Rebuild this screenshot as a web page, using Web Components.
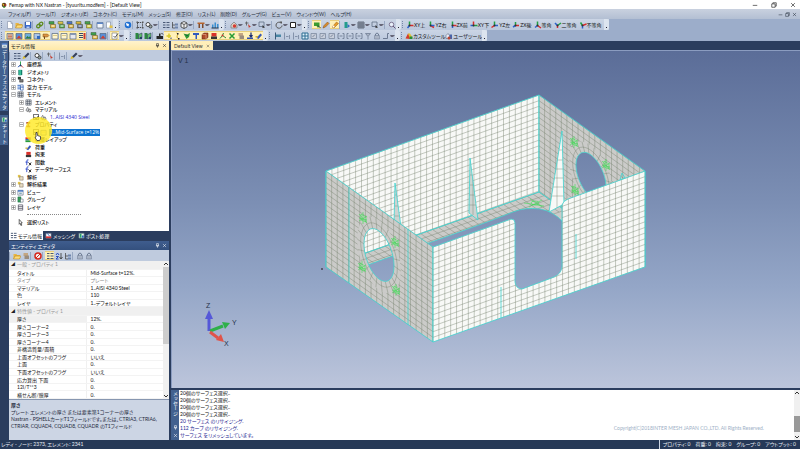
<!DOCTYPE html>
<html lang="ja">
<head>
<meta charset="utf-8">
<title>Femap with NX Nastran</title>
<style>
  html, body {
    height: 100%;
    margin: 0;
  }

  body {
    font: 5px/8px Lato, "Noto Sans CJK JP", sans-serif;
    font-feature-settings: "palt";
    background: #2b3d5e;
    color: #111;
    overflow: hidden;
  }
</style>
</head>
<body>
<femap-app></femap-app>

<script>
const reset = `
  * { box-sizing: border-box; }
  button, input, textarea { font: inherit; color: inherit; margin: 0; padding: 0; border: 0; background: none; }
  button { font-feature-settings: inherit; white-space: nowrap; }
  svg { display: block; }
`;

// 16x16 icon artwork
const axes = (a, b, c) => `<g fill="none" stroke-width="3"><path stroke="#22a045" d="M7 9${a}"/><path stroke="#d92c2c" d="M7 9${b}"/><path stroke="#2a62cf" d="M7 9${c}"/></g><circle cx="7" cy="9" r="2" fill="#333"/>`;
const box = (fill, extra = '') => `<path d="M2 3h12v11H2z" fill="${fill}" stroke="#54657f" stroke-width="1.4"/>${extra}`;
const stack = (a, b) => `<path d="M2 1h10v5H2z" fill="${a}" stroke="#3c5a3c"/><path d="M5 7h10v7H5z" fill="${b}" stroke="#5c5020"/><path d="M7 10h6" stroke="#fff" stroke-width="2"/>`;

const ICONS = {
  app: '<circle cx="8" cy="8" r="6" fill="#553a1e"/><path d="M3 3l6 3-3 6z" fill="#e2b32c"/><path d="M8 8l6-3v6z" fill="#c1392b"/><path d="M5 12h6v3H6z" fill="#3c9a3c"/>',
  new: '<path d="M3 1h7l3 4v10H3z" fill="#fff" stroke="#6c7b94"/><path d="M10 1v4h3" fill="none" stroke="#6c7b94"/>',
  open: '<path d="M1 4h6l1 2h6v8H1z" fill="#e9b543"/><path d="M4 8h12l-3 6H1z" fill="#ffdc77" stroke="#a67a1d"/>',
  save: '<path d="M2 2h12v12H2z" fill="#3a6bd0" stroke="#27458b"/><path d="M4 2h8v6H4z" fill="#fff"/><path d="M5 11h6v3H5z" fill="#b9cdf2"/>',
  link: '<g fill="none" stroke="#5e8a1e" stroke-width="2.6"><ellipse cx="5" cy="10" rx="4" ry="3" transform="rotate(-40 5 10)"/><ellipse cx="10" cy="6" rx="4" ry="3" transform="rotate(-40 10 6)"/></g>',
  s1: stack('#3fa24a', '#e8b93c'), s2: stack('#e2c34a', '#47a04c'), s3: stack('#4f6fd0', '#d9b03c'), s4: stack('#d8b23a', '#55699a'), s5: stack('#47a04c', '#d4cf3a'),
  win: box('#f4f7fc', '<path d="M2 3h12v3H2z" fill="#5c86c9"/>'),
  page: '<path d="M3 2h8v12H3z" fill="#fff" stroke="#67768e"/><path d="M9 9h6v5H9z" fill="#e2c34a"/>',
  globe: '<circle cx="8" cy="8" r="6.5" fill="#1e6fd2"/><path d="M4 4l6 2-1 5-4-2z" fill="#fff"/>',
  dash: '<path d="M3 3h10v10H3z" fill="none" stroke="#222" stroke-width="1.5" stroke-dasharray="3 1.5"/><path d="M1 1h3v3H1zM12 1h3v3h-3zM1 12h3v3H1zM12 12h3v3h-3z" fill="#555"/>',
  gear: '<circle cx="6" cy="7" r="4" fill="#fff" stroke="#444" stroke-width="2"/><circle cx="11" cy="11" r="3" fill="#9aa" stroke="#444" stroke-width="2"/>',
  list: '<path d="M2 3h5M2 8h5M2 13h5M9 3h6M9 8h6M9 13h6" stroke="#4a5a76" stroke-width="2.2"/>',
  tree: '<path d="M3 2v12h5M3 8h5" fill="none" stroke="#444" stroke-width="1.5"/><path d="M8 5h6v4H8zM8 11h6v4H8z" fill="#6f86ad"/>',
  cube: '<path d="M8 1l6 3v8l-6 3-6-3V4z" fill="#eee" stroke="#333" stroke-width="1.5"/><path d="M2 4l6 3 6-3M8 7v8" fill="none" stroke="#333" stroke-width="1.5"/>',
  beam: '<path d="M1 3h14v3H1z" fill="#b8642b"/><path d="M3 6h3v8H3zM10 6h3v8h-3z" fill="#7c4a2c"/>',
  bars: '<path d="M2 7h3v7H2zM7 3h3v11H7zM12 6h3v8h-3z" fill="#3a8fd0"/><path d="M1 14h14" stroke="#234" stroke-width="2"/>',
  home: '<path d="M2 8l6-6 6 6v6H2z" fill="#dcd3c6" stroke="#555"/><circle cx="9" cy="10" r="3.5" fill="#d63c31"/>',
  pick: '<path d="M2 4h7M5 1v8" stroke="#555" stroke-width="1.6"/><path d="M8 6l6 6-3 0-1 3z" fill="#c43c2c"/>',
  sel: '<path d="M2 2h10v9H2z" fill="none" stroke="#59687f" stroke-width="1.5"/><path d="M9 8l5 5-5 1z" fill="#333"/>',
  rot: '<path d="M12 4a6 6 0 1 0 2 5" fill="none" stroke="#555" stroke-width="2"/><path d="M9 1h5v5z" fill="#555"/>',
  sq: '<path d="M3 3h10v10H3z" fill="#fff" stroke="#222" stroke-width="2"/>',
  leaf: '<path d="M2 3h11v7l-3 4-3-4H2z" fill="#3b9b30"/><path d="M10 9l5 5" stroke="#234" stroke-width="2"/>',
  pencil: '<path d="M2 14l2-5 7-7 3 3-7 7z" fill="#d98c2d" stroke="#7e4d16"/>',
  pipe: '<path d="M2 12L11 2l4 3-9 9z" fill="#e59a2b" stroke="#965e14"/><circle cx="5" cy="11" r="2" fill="#fff"/>',
  teal: '<path d="M3 2h6v12H3z" fill="#239c8c"/><path d="M9 6l5 4-5 4z" fill="#2f6fc0"/>',
  grid: '<path d="M2 2h12v12H2zM2 6h12M2 10h12M6 2v12M10 2v12" fill="none" stroke="#3d4655" stroke-width="1.4"/>',
  lens: '<circle cx="7" cy="7" r="4.5" fill="#e9f0fb" stroke="#657" stroke-width="1.5"/><path d="M10 10l5 5" stroke="#657" stroke-width="2"/>',
  ax1: axes('V1', 'H15', 'L3 14'), ax2: axes('V1', 'L14 13', 'H15'), ax3: axes('V1', 'H15', 'V14'),
  ax4: axes('H15', 'V1', 'H1'), ax5: axes('V1', 'L1 13', 'H14'), ax6: axes('V2', 'H14', 'L2 12'),
  ax7: axes('V1', 'L14 14', 'L2 13'), ax8: axes('L14 4', 'V14', 'L2 4'), ax9: axes('L3 3', 'L15 6', 'V15'),
  g1: box('#d9cdbf', '<path d="M4 6h8M4 9h8M4 12h8" stroke="#c6562e" stroke-width="1.4"/>'),
  g2: box('#5a8fd6', '<path d="M3 13l5-6 5 6z" fill="#d33f2e"/>'),
  g3: box('#6fb0dd', '<path d="M3 13l4-5 3 3 2-3 2 5z" fill="#2f7d38"/>'),
  g4: box('#a9c5ec', '<path d="M8 8h6v6H8z" fill="#3169bd"/>'),
  g5: '<path d="M2 4h9l3 3-3 3H2z" fill="#db9440" stroke="#74491a"/><path d="M5 9v5" stroke="#74491a" stroke-width="2"/>',
  g6: box('#fff6cf', '<path d="M4 7h8" stroke="#b8a040"/>'),
  g7: box('#e6e9ef', '<path d="M2 3h12v3H2z" fill="#8798b5"/>'),
  g8: '<path d="M2 3h8M2 7h8M2 11h8" stroke="#35486d" stroke-width="2"/><path d="M11 2h4v12h-4z" fill="#c9382e"/>',
  chk: '<path d="M2 2h10v12H2z" fill="#fff" stroke="#555"/><path d="M5 8l3 3 6-8" fill="none" stroke="#333" stroke-width="1.6"/>',
  mesh: '<path d="M1 2h6v12H1z" fill="#2c8740"/><path d="M7 5l7-3v9l-7 3z" fill="#63c06d" stroke="#225" /><circle cx="12" cy="12" r="2.5" fill="#246"/>',
  dark: '<path d="M1 8h5V3h3v5h5v6H1z" fill="#262626"/><path d="M11 2l3 3" stroke="#262626" stroke-width="2"/>',
  dot: '<path d="M3 8h9M8 3v9" stroke="#d8c92c" stroke-width="3"/><path d="M10 11h4v3h-4z" fill="#999"/>',
  curve: '<path d="M5 2c6 2-3 7 4 12" fill="none" stroke="#c9a21c" stroke-width="2"/><path d="M6 2h3v3H6zM8 12h3v3H8z" fill="#223"/>',
  surf: '<path d="M1 3l7 2 6-3-2 8-5 4z" fill="#2e9a35"/><path d="M6 5l3 3" stroke="#134" stroke-width="2"/>',
  tee: '<path d="M2 2h12v4h-4v8H7V6H2z" fill="#3159be"/>',
  solid: '<path d="M2 5l4-3h8v9l-4 3H2z" fill="#b14a28" stroke="#5b2412"/><path d="M2 5h8v9" fill="none" stroke="#f0c9a8"/>',
  flag: '<path d="M3 2h10v7H3z" fill="#d9312a"/><path d="M2 9h12v5H2z" fill="#353535"/>',
  node: '<path d="M2 13L7 7l7 5M7 7l2-5" fill="none" stroke="#2a8a3a" stroke-width="2"/><circle cx="7" cy="7" r="2" fill="#c33"/>',
  cross: '<path d="M3 3l10 10M13 3L3 13" stroke="#279c36" stroke-width="3"/>',
  mix: '<path d="M3 2h9v6H3z" fill="#c4a682"/><path d="M5 7h9v7H5z" fill="#9a8c7d"/>',
  load: '<path d="M2 11h12v3H2z" fill="#2d4fae"/><path d="M10 1v8M7 6l3 4 3-4" stroke="#1c2e74" stroke-width="2.5" fill="none"/>',
  bond: '<path d="M3 12l8-9 3 3-7 8z" fill="#3857b8"/><path d="M1 8h5v3H1z" fill="#d3b02f"/>',
  al: '<path d="M3 1v14" stroke="#395a78" stroke-width="2"/><path d="M4 5h10v5H4z" fill="#4a87a5"/>',
  al2: '<path d="M3 1v14M13 6v8M6 9h5" stroke="#8492aa" stroke-width="2"/>',
  tbl: '<path d="M2 2h12v12H2zM2 8h12M8 2v12" fill="#dff0fa" stroke="#2d6c92" stroke-width="2"/>',
  gr: '<path d="M2 3h11v10H2z" fill="#c9cfdb" stroke="#78859b" stroke-width="1.5"/><path d="M5 10l5-5" stroke="#78859b" stroke-width="2"/>',
  br: '<path d="M5 3H2v10h3M11 3h3v10h-3M5 8h6" fill="none" stroke="#77849b" stroke-width="2"/>',
  hour: '<path d="M3 3h10L8 9zM8 9v6" fill="#aab4c5" stroke="#6c7a92" stroke-width="1.5"/>',
  lock: '<path d="M3 7h10v7H3z" fill="#aab4c5" stroke="#6c7a92"/><path d="M5 7V4q3-4 6 0v3" fill="none" stroke="#6c7a92" stroke-width="2"/>',
  ang: '<path d="M2 13h9V3h3" fill="none" stroke="#6c7a92" stroke-width="2"/>',
  tool: '<path d="M1 13l5-10 4 4v7z" fill="#d43a2a"/><path d="M6 3h4l5 8-5 3z" fill="#e1c030"/><path d="M9 9h6v5H9z" fill="#268a38"/>',
  user: '<path d="M2 13V7l4-4 3 4v6z" fill="#e8e8f4" stroke="#456"/><path d="M9 5h5v9H9z" fill="#4864a8"/><circle cx="8" cy="12" r="3" fill="#b43"/>',
  csys: '<path d="M8 9V1" stroke="#1c9a3a" stroke-width="2"/><path d="M8 9l6 6" stroke="#d33" stroke-width="2"/><path d="M8 9l-6 5" stroke="#2450c0" stroke-width="2"/><path d="M8 7l3 5H5z" fill="#246"/>',
  geom: '<path d="M3 2h9v12H3z" fill="#13806a"/><path d="M5 2h4v12H5z" fill="#3cc39c"/>',
  conn: '<path d="M2 2h7v6H2z" fill="#333"/><path d="M6 8h8v6H6z" fill="#777" stroke="#222"/>',
  aero: '<path d="M1 3h6M1 7h14M1 11h8" stroke="#2a62c0" stroke-width="2"/><path d="M8 2h6v12H8z" fill="none" stroke="#2450a0" stroke-width="1.4"/>',
  mat: '<path d="M2 10l4-7 3 3-3 7zM8 9l4-2 2 5-5 2z" fill="#d4d8dd" stroke="#555" stroke-width="1.4"/>',
  prop: '<path d="M3 2h9v4H9v5h3v3H3v-3h3V6H3z" fill="#b4472c"/>',
  lay: '<path d="M1 3h12v4H1z" fill="#d33"/><path d="M1 7h12v3H1z" fill="#2a62c0"/><path d="M1 10h12v4H1z" fill="#279c36"/>',
  fxy: '<path d="M8 2Q4 0 4 6v8M1 7h6" fill="none" stroke="#2b46c8" stroke-width="2"/><path d="M8 8l6 6M14 8l-5 7" stroke="#111" stroke-width="2"/>',
  res: '<path d="M2 2h6v6H2z" fill="#e2c34a"/><path d="M6 6h8v8H6z" fill="#e6dcc2" stroke="#654"/>',
  view: box('#fff', '<path d="M2 3h12v3H2z" fill="#356cc2"/><path d="M5 8h6v4H5z" fill="#8ab"/>'),
  grp: '<path d="M2 2h7v12H2z" fill="#379a55" stroke="#164"/><path d="M8 7h6v7H8z" fill="#fff" stroke="#345"/>',
  layer: '<path d="M3 2h10v12H3zM3 6h10M3 10h10" fill="#fff" stroke="#445" stroke-width="1.6"/>',
  cur: '<path d="M5 1l7 8H9l2 5-2 1-2-5-2 2z" fill="#fff" stroke="#111" stroke-width="1.4"/>',
  tabm: box('#fff', '<path d="M2 10h12v4H2z" fill="#d33"/><path d="M5 3l6 7" stroke="#2a62c0" stroke-width="2"/>'),
  tabp: box('#e8f6e6', '<path d="M4 4h4v9H4z" fill="#27a06a"/><path d="M9 8h4v5H9z" fill="#2a62c0"/>'),
  no: '<circle cx="8" cy="8" r="6" fill="#f6f0f0" stroke="#d5271c" stroke-width="3"/><path d="M4 12l8-8" stroke="#d5271c" stroke-width="2"/>',
  az: '<path d="M2 6l3-4 3 4M2 9h5l-5 5h5" fill="none" stroke="#2a4ec0" stroke-width="2"/><path d="M12 2v11M9 10l3 4 3-4" fill="none" stroke="#333" stroke-width="1.6"/>',
  brush: '<path d="M4 9L12 1l3 3-8 8z" fill="#35415c"/><path d="M1 14l2-6 5 4z" fill="#e0bc22"/>',
  pin: '<path d="M5 2h6v7H5zM3 9h10M8 9v6" fill="none" stroke="currentColor" stroke-width="1.8"/>',
  close: '<path d="M3 3l10 10M13 3L3 13" stroke="currentColor" stroke-width="1.6"/>',
  min: '<path d="M2 9h12" stroke="currentColor" stroke-width="1.6"/>',
  max: '<path d="M2 5h9v9H2zM5 5V2h9v9h-3" fill="none" stroke="currentColor" stroke-width="1.6"/>'
};

class UiIcon extends HTMLElement {
  connectedCallback() {
    const root = this.attachShadow({mode: 'open'});
    root.innerHTML = `
      <style>
        :host { display: block; flex: none; width: 8px; height: 8px; }
        svg { display: block; width: 100%; height: 100%; }
      </style>
      <svg viewBox="0 0 16 16" aria-hidden="true">${ICONS[this.getAttribute('name')] || ''}</svg>
    `;
  }
}

// items: space separated names; "*" marks a pressed button, "name:text" adds a label
class ToolBar extends HTMLElement {
  connectedCallback() {
    const html = this.getAttribute('items').trim().split(/\s+/).map(item => {
      if (item === 'grip') return '<i class="grip"></i>';
      if (item === '|') return '<i class="sep"></i>';
      if (item === 'v') return '<i class="drop"></i>';
      if (item === 'end') return '<i class="end"></i>';
      const on = item[0] === '*';
      const [name, label] = item.replace('*', '').split(':');
      const cls = on ? 'on' : name.startsWith('ax') ? 'axis' : '';
      return `<button class="${cls}" aria-label="${label || name}"><ui-icon name="${name}"></ui-icon>${label || ''}</button>`;
    }).join('');
    this.attachShadow({mode: 'open'}).innerHTML = `
      <style>
        ${reset}
        :host { display: flex; height: 11px; }
        .strip { display: flex; align-items: center; background: linear-gradient(#cbd5e5, #bac7dc); }
        button { display: flex; align-items: center; justify-content: center; min-width: 9px; height: 9px; }
        button.on { background: #fff1b8; border: solid #e8cf7d; border-width: 1px 0; }
        button.axis { padding-right: 2px; }
        .grip { width: 4px; height: 7px; border-left: 1px dotted #7688a6; margin-left: 1px; }
        .sep { width: 3px; height: 8px; border-left: 1px solid #98a8c2; }
        .drop { width: 5px; height: 2px; border: solid transparent; border-width: 2px 2px 0 1px; border-top-color: #667; }
        .end { width: 5px; align-self: stretch; background: #dce4ef; border-radius: 0 2px 2px 0; padding: 8px 0 0 2px; }
        .end::after { content: ""; display: block; width: 1px; height: 1px; background: #223; }
      </style>
      <div class="strip" role="toolbar">${html}</div>
    `;
  }
}

class MenuBar extends HTMLElement {
  connectedCallback() {
    const items = ['ファイル(F)', 'ツール(T)', 'ジオメトリ(E)', 'コネクト(C)', 'モデル(M)', 'メッシュ(S)', '修正(O)', 'リスト(L)', '削除(D)', 'グループ(G)', 'ビュー(V)', 'ウィンドウ(W)', 'ヘルプ(H)'];
    this.attachShadow({mode: 'open'}).innerHTML = `
      <style>
        ${reset}
        :host { display: flex; align-items: center; height: 10px; padding: 0 3px 0 8px; background: linear-gradient(#c9d1df, #b3bfd3); color: #27303f; }
        nav { display: flex; gap: 5px; flex: 1; }
        .win { display: flex; gap: 2px; }
        .win ui-icon { width: 5px; height: 5px; }
      </style>
      <nav>${items.map(t => `<button>${t}</button>`).join('')}</nav>
      <div class="win"><ui-icon name="min"></ui-icon><ui-icon name="max"></ui-icon><ui-icon name="close"></ui-icon></div>
    `;
  }
}

class TitleBar extends HTMLElement {
  connectedCallback() {
    this.attachShadow({mode: 'open'}).innerHTML = `
      <style>
        ${reset}
        :host { display: flex; align-items: center; gap: 2px; height: 9px; padding: 0 4px 0 1px; background: #fff; }
        ui-icon { width: 6px; height: 6px; }
        span { flex: 1; }
        div { display: flex; gap: 13px; }
      </style>
      <ui-icon name="app"></ui-icon><span><slot></slot></span>
      <div>
        <button aria-label="最小化"><ui-icon name="min"></ui-icon></button>
        <button aria-label="元に戻す"><ui-icon name="max"></ui-icon></button>
        <button aria-label="閉じる"><ui-icon name="close"></ui-icon></button>
      </div>
    `;
  }
}

class DockPanel extends HTMLElement {
  connectedCallback() {
    this.attachShadow({mode: 'open'}).innerHTML = `
      <style>
        ${reset}
        :host { display: flex; flex-direction: column; flex: 1 1 0; min-height: 0; }
        header { display: flex; align-items: center; gap: 2px; height: 9px; flex: none; padding: 0 2px; background: linear-gradient(#3f5d8e, #34507e); color: #fff; }
        :host([active]) header { background: linear-gradient(#fff3cd, #ffe9a8); color: #222; }
        span { flex: 1; }
        ui-icon { width: 5px; height: 5px; }
      </style>
      <header><span>${this.getAttribute('heading')}</span>
        <button aria-label="固定"><ui-icon name="pin"></ui-icon></button>
        <button aria-label="閉じる"><ui-icon name="close"></ui-icon></button>
      </header>
      <slot></slot>
    `;
  }
}

class ScrollTrack extends HTMLElement {
  connectedCallback() {
    this.attachShadow({mode: 'open'}).innerHTML = `
      <style>
        :host { display: flex; flex-direction: column; flex: none; width: 6px; background: #f0f0f0; }
        svg { width: 6px; height: 6px; flex: none; }
        .before { flex: var(--before, 0); }
        .thumb { flex: var(--size, 1); background: var(--thumb, #cdcdcd); }
        .after { flex: var(--after, 1); }
      </style>
      <svg viewBox="0 0 6 6"><path d="M1 4l2-2 2 2" fill="none" stroke="#333"/></svg>
      <div class="before"></div><div class="thumb"></div><div class="after"></div>
      <svg viewBox="0 0 6 6"><path d="M1 2l2 2 2-2" fill="none" stroke="#333"/></svg>
    `;
  }
}

class TreeItem extends HTMLElement {
  connectedCallback() {
    const exp = this.getAttribute('exp') || '';
    const check = this.hasAttribute('check');
    this.attachShadow({mode: 'open'}).innerHTML = `
      <style>
        ${reset}
        :host { display: flex; align-items: center; flex: 1 1 0; min-height: 0; gap: 1px; line-height: 7px; white-space: nowrap; font-weight: 500;
          padding-left: calc(1px + var(--level) * 8px); }
        .exp { display: grid; place-items: center; width: 6px; height: 5px; }
        .exp svg { width: 5px; height: 5px; }
        input { appearance: none; display: grid; place-items: center; width: 6px; height: 6px; border: 1px solid #777; background: #fff; }
        input:checked::after { content: ""; width: 2px; height: 3px; border: solid #333; border-width: 0 1px 1px 0; transform: rotate(40deg); }
        ui-icon { width: 7px; height: 7px; margin-right: 1px; }
        label { padding: 0 1px; }
        :host([blue]) label { color: #2626d0; }
        :host([selected]) label { background: #0b74d1; color: #fff; }
        :host([blue]) label, :host([selected]) label { font-family: "Open Sans", sans-serif; }
      </style>
      <span class="exp">${exp ? `<svg viewBox="0 0 5 5"><path d="M.5.5h4v4h-4z" fill="#fff" stroke="#bbb"/><path d="M1 2.5h3${exp === '+' ? 'M2.5 1v3' : ''}" stroke="#666" stroke-width=".6"/></svg>` : ''}</span>
      ${check ? '<input type="checkbox" id="c" checked>' : ''}
      <ui-icon name="${this.getAttribute('icon')}"></ui-icon><label for="c"><slot></slot></label>
    `;
    this.style.setProperty('--level', this.getAttribute('level') || 0);
  }
}

class ModelTree extends HTMLElement {
  connectedCallback() {
    this.attachShadow({mode: 'open'}).innerHTML = `
      <style>
        ${reset}
        :host { display: flex; flex-direction: column; flex: 1 1 0; min-height: 0; position: relative; padding-bottom: 5px; background: #fff; }
        .rule { flex: 1 1 0; display: flex; align-items: center; padding-left: 18px; }
        .rule::after { content: ""; width: 54px; border-top: 1px dotted #888; }
        .halo { position: absolute; left: 16px; top: 56px; width: 27px; height: 27px; border-radius: 50%; background: #ffe920; opacity: .8; }
        .pointer { position: absolute; left: 25px; top: 71px; width: 8px; height: 9px; }
      </style>
      <tree-item exp="+" icon="csys">座標系</tree-item>
      <tree-item exp="+" icon="geom">ジオメトリ</tree-item>
      <tree-item exp="+" icon="conn">コネクト</tree-item>
      <tree-item exp="+" icon="aero">空力 モデル</tree-item>
      <tree-item exp="-" icon="grid">モデル</tree-item>
      <tree-item level="1" exp="+" icon="grid">エレメント</tree-item>
      <tree-item level="1" exp="-" icon="mat">マテリアル</tree-item>
      <tree-item level="2" check blue icon="mat">1..AISI 4340 Steel</tree-item>
      <tree-item level="1" exp="-" icon="prop">プロパティ</tree-item>
      <tree-item level="2" check selected icon="g6">1..Mid-Surface t=12%</tree-item>
      <tree-item level="1" icon="lay">積層レイアップ</tree-item>
      <tree-item level="1" icon="bond">荷重</tree-item>
      <tree-item level="1" icon="flag">拘束</tree-item>
      <tree-item level="1" icon="fxy">関数</tree-item>
      <tree-item level="1" icon="fxy">データサーフェス</tree-item>
      <tree-item icon="res">解析</tree-item>
      <tree-item exp="+" icon="res">解析結果</tree-item>
      <tree-item exp="+" icon="view">ビュー</tree-item>
      <tree-item exp="+" icon="grp">グループ</tree-item>
      <tree-item exp="+" icon="layer">レイヤ</tree-item>
      <div class="rule"></div>
      <tree-item icon="cur">選択リスト</tree-item>
      <div class="halo"></div>
      <svg class="pointer" viewBox="0 0 16 18"><path d="M4 1l2 0 1 6 6 2v5l-2 3H6L2 11l2-1z" fill="#fff" stroke="#223" stroke-width="1.5"/></svg>
    `;
  }
}

class DockTabs extends HTMLElement {
  connectedCallback() {
    this.attachShadow({mode: 'open'}).innerHTML = `
      <style>
        ${reset}
        :host { display: flex; height: 9px; flex: none; gap: 1px; color: #fff; }
        button { display: flex; align-items: center; gap: 1px; padding: 0 1px; }
        .on { background: #fff; color: #222; }
        ui-icon { width: 7px; height: 7px; }
      </style>
      <button class="on"><ui-icon name="list"></ui-icon>モデル情報</button>
      <button><ui-icon name="tabm"></ui-icon>メッシング</button>
      <button><ui-icon name="tabp"></ui-icon>ポスト処理</button>
    `;
  }
}

class PropertyGrid extends HTMLElement {
  connectedCallback() {
    const rows = [
      ['一般 - プロパティ 1'],
      ['タイトル', 'Mid-Surface t=12%.'],
      ['タイプ', 'プレート', 'dim'],
      ['マテリアル', '1..AISI 4340 Steel'],
      ['色', '110'],
      ['レイヤ', '1..デフォルトレイヤ'],
      ['特性値 - プロパティ 1'],
      ['厚さ', '12%.', 'cur'],
      ['厚さコーナー2', '0.'],
      ['厚さコーナー3', '0.'],
      ['厚さコーナー4', '0.'],
      ['非構造質量/面積', '0.'],
      ['上面オフセットのフラグ', 'いいえ'],
      ['上面', '0.'],
      ['下面オフセットのフラグ', 'いいえ'],
      ['応力算出 下面', '0.'],
      ['12I/T**3', '0.'],
      ['横せん断/膜厚', '0.']
    ];
    this.attachShadow({mode: 'open'}).innerHTML = `
      <style>
        ${reset}
        :host { display: flex; flex: 1 1 0; min-height: 0; background: #fff; }
        .view { flex: 1; overflow: hidden; }
        table { width: 100%; height: 100%; border-collapse: collapse; table-layout: fixed; }
        th, td { padding: 0 0 0 8px; line-height: 6px; text-align: left; font-weight: 400; white-space: nowrap; border-bottom: 1px solid #f3f3f3; }
        td { padding-left: 4px; border-left: 1px solid #f0f0f0; }
        .group th { background: #f0f0f0; color: #999; padding-left: 2px; }
        .group th::before { content: "◢"; color: #222; font-size: 4px; margin-right: 2px; }
        .dim { color: #8a8a8a; }
        .cur th { background: #f0f0f0; }
        scroll-track { --size: 75; --after: 48; }
      </style>
      <div class="view"><table><colgroup><col span="2" width="50%"></colgroup>
        ${rows.map(([k, v, c]) => v ? `<tr class="${c || ''}"><th scope="row">${k}</th><td>${v}</td></tr>` : `<tr class="group"><th colspan="2">${k}</th></tr>`).join('')}
      </table></div>
      <scroll-track></scroll-track>
    `;
  }
}

class SideRail extends HTMLElement {
  connectedCallback() {
    this.attachShadow({mode: 'open'}).innerHTML = `
      <style>
        ${reset}
        :host { display: flex; flex-direction: column; flex: none; width: 8px; gap: 4px; }
        button { display: flex; flex-direction: column; align-items: center; gap: 1px; width: 8px; padding: 1px 0; background: #42618f; color: #fff; }
        span { writing-mode: vertical-rl; font-size: 5px; line-height: 8px; }
        ui-icon { width: 7px; height: 7px; }
      </style>
      <button><ui-icon name="view"></ui-icon><span>データサーフェスエディタ</span></button>
      <button><ui-icon name="tabp"></ui-icon><span>チャート</span></button>
    `;
  }
}

class ModelView extends HTMLElement {
  lines(p, u, v, nu, nv) {
    let d = '';
    for (let i = 0; i <= nu; i++) d += `M${p[0] + u[0] * i / nu} ${p[1] + u[1] * i / nu}l${v[0]} ${v[1]}`;
    for (let j = 0; j <= nv; j++) d += `M${p[0] + v[0] * j / nv} ${p[1] + v[1] * j / nv}l${u[0]} ${u[1]}`;
    return d;
  }

  ring(c, u, r, k) {
    const pts = [];
    for (let i = 0; i < 40; i++) {
      const t = i * Math.PI / 20;
      pts.push(`${(c[0] + k * u[0] * Math.cos(t)).toFixed(1)} ${(c[1] + k * (u[1] * Math.cos(t) + r * Math.sin(t))).toFixed(1)}`);
    }
    return 'M' + pts.join('L') + 'Z';
  }

  // radial mesh round a bore
  fan(c, u, r) {
    let d = '';
    for (let i = 0; i < 22; i++) {
      const t = i * Math.PI / 11;
      const x = u[0] * Math.cos(t), y = u[1] * Math.cos(t) + r * Math.sin(t);
      d += `M${c[0] + x} ${c[1] + y}L${c[0] + x * 1.45} ${c[1] + y * 1.45}`;
    }
    return d + this.ring(c, u, r, 1.22);
  }

  wall(id, shape, fill, grid, extra = '') {
    return `<clipPath id="${id}"><path d="${shape}" clip-rule="evenodd"/></clipPath>
      <path d="${shape}" fill="${fill}" fill-rule="evenodd"/>
      <g clip-path="url(#${id})"><path class="m" d="${grid}"/>${extra}</g>
      <path class="e" d="${shape}"/>`;
  }

  bolt(x, y) {
    return `<path class="b" d="M${x - 4} ${y - 4}l8 9M${x + 4} ${y - 2}l-8 5M${x} ${y - 6}v12M${x - 4} ${y}l8 2M${x - 2} ${y - 4}l5 3v5l-5-2z"/>`;
  }

  connectedCallback() {
    const u = [15, 11];
    const left = [379, 255], right = [591, 176];
    const holeL = this.ring(left, u, 24, 1), holeR = this.ring(right, u, 21, 1);
    const gray = '#cbcbc9', white = '#f8f9f7';
    const fanOf = (c, r) => `<path d="${this.ring(c, u, r, 1.45)}" fill="${gray}"/><path class="m" d="${this.fan(c, u, r)}"/>`;
    this.attachShadow({mode: 'open'}).innerHTML = `
      <style>
        :host { display: block; min-height: 0; background: linear-gradient(#5b6d98, #7c8fb4 45%, #94a6c7 70%, #bcc5db); }
        svg { display: block; width: 100%; height: 100%; }
        .m { fill: none; stroke: #77836f; stroke-width: .42; }
        .e { fill: none; stroke: #3fd3cf; stroke-width: .8; }
        .b { fill: none; stroke: #3fdd55; stroke-width: .6; }
        text { font: 7px "Liberation Sans", sans-serif; fill: #26324a; }
      </style>
      <svg viewBox="172 51 628 337">
        <text x="178" y="63">V 1</text>
        ${this.wall('back', 'M326 171L539 95V192L326 267Z', white, this.lines([326, 171], [213, -76], [0, 96], 36, 17))}
        ${this.wall('rear', 'M539 95L645 171V267L539 192Z' + holeR, gray, this.lines([539, 95], [106, 76], [0, 96], 19, 17), fanOf(right, 21))}
        ${this.wall('floor', 'M326 267L539 192L563 209V222Q553 211 540 209Q525 207 513 212L490 221L340 275Z', gray, this.lines([326, 267], [213, -75], [26, 18], 36, 5))}
        ${this.wall('rib1', 'M395 183L394 224L401 227Z', '#cdd3d1', 'M394 195h4M394 206h6M394 216h6')}
        ${this.wall('rib2', 'M470 158L469 213L478 220Z', '#cdd3d1', 'M468 175h8M468 185h8M468 195h8M468 205h8M473 175v40')}
        ${this.wall('rib3', 'M562 131L549 212L564 204Z', white, 'M548 150h16M548 160h16M548 169h16M548 178h16M548 187h16M548 196h16M557 150v60')}
        <ellipse class="b" cx="535" cy="203" rx="4" ry="2"/><path class="b" d="M524 203l20 3M530 199l12 8M529 207l13-7"/>
        ${this.bolt(574, 142)}${this.bolt(606, 165)}${this.bolt(575, 190)}
        <path d="M620 180l2-7 3 5z" class="e" fill="#5fd"/>
        ${this.wall('side', 'M326 171L433 247V342L326 267Z' + holeL, gray, this.lines([326, 171], [107, 76], [0, 96], 19, 17), fanOf(left, 24))}
        <path class="e" d="M349 188v95M408 229v96"/>
        ${this.bolt(363, 218)}${this.bolt(395, 242)}${this.bolt(362, 267)}${this.bolt(396, 290)}
        ${this.wall('front', 'M433 247L511 219Q515 219 515 223V282Q516 289 522 289L554 277Q561 274 562 267V205Q563 201 568 199L645 171V267L433 342Z', white, this.lines([433, 247], [212, -76], [0, 96], 36, 17))}
        <path class="e" d="M501 287v31M576 234v25"/>
        <circle cx="322" cy="269" r="1" fill="#445"/>
        <g stroke-width="3">
          <path d="M209 331v-14" stroke="#5558d8"/><path d="M209 310l4 9h-8z" fill="#5558d8"/>
          <path d="M210 331l13-5" stroke="#2fb04a"/><path d="M230 323l-8-1 3 7z" fill="#2fb04a"/>
          <path d="M210 332l8 6" stroke="#e0544a"/><path d="M224 342l-3-8-5 6z" fill="#e0544a"/>
        </g>
        <text x="206" y="308">Z</text><text x="232" y="325">Y</text><text x="224" y="346">X</text>
      </svg>
    `;
  }
}

class MessagePane extends HTMLElement {
  connectedCallback() {
    this.attachShadow({mode: 'open'}).innerHTML = `
      <style>
        ${reset}
        :host { display: flex; flex: none; height: 50px; position: relative; background: #fff; }
        aside { display: flex; flex-direction: column; align-items: center; gap: 3px; width: 8px; padding: 1px 0 2px; background: #42618f; color: #fff; }
        aside span { flex: 1; writing-mode: vertical-rl; font-size: 5px; line-height: 8px; }
        aside ui-icon { width: 5px; height: 5px; }
        .log { flex: 1; padding: 0 1px; line-height: 7px; overflow: hidden; }
        p { margin: 0; }
        .info { color: #23238f; }
        small { position: absolute; right: 36px; bottom: 8px; font-size: 5px; line-height: 8px; color: #9eb0c6; }
        scroll-track { --before: 21; --size: 16; --after: 2; --thumb: #999; }
      </style>
      <aside><span>メッセージ</span><ui-icon name="pin"></ui-icon><ui-icon name="close"></ui-icon></aside>
      <div class="log">
        <p>20個のサーフェス選択..</p>
        <p>20個のサーフェス選択..</p>
        <p>20個のサーフェス選択..</p>
        <p>20個のサーフェス選択..</p>
        <p class="info">20 サーフェス のリサイジング.</p>
        <p class="info">112 カーブ のリサイジング.</p>
        <p class="info">サーフェス をリメッシュしています。</p>
      </div>
      <small>Copyright(C)2018INTER MESH JAPAN CO.,LTD. All Rights Reserved.</small>
      <scroll-track></scroll-track>
    `;
  }
}

class StatusBar extends HTMLElement {
  connectedCallback() {
    this.attachShadow({mode: 'open'}).innerHTML = `
      <style>
        :host { display: flex; flex: none; height: 9px; padding: 0 4px 0 1px; gap: 5px; background: #263957; color: #e8edf5; }
        .ready { flex: 1; }
        .first { border-left: 1px solid #cdd6e4; padding-left: 3px; }
      </style>
      <span class="ready">レディ - ノード: 2373,  エレメント: 2341</span>
      <span class="first">プロパティ: 0</span><span>荷重: 0</span><span>拘束: 0</span><span>グループ: 0</span><span>アウトプット: 0</span>
    `;
  }
}

class FemapApp extends HTMLElement {
  connectedCallback() {
    this.attachShadow({mode: 'open'}).innerHTML = `
      <style>
        ${reset}
        :host { display: flex; flex-direction: column; height: 100vh; }
        .bars { background: #9cadca; }
        main { display: flex; flex: 1; min-height: 0; }
        .left { display: flex; flex-direction: column; gap: 1px; flex: none; width: 160px; margin: 0 2px 0 1px; }
        .left tool-bar { background: #bfcbde; }
        .help { flex: none; height: 41px; padding: 2px 0 2px 2px; background: #ccd5e4; border-top: 1px solid #8796b0; color: #1f2a3c; line-height: 7px; }
        .help b { display: block; }
        .right { display: flex; flex-direction: column; flex: 1; min-width: 0; }
        .tabs { height: 9px; flex: none; display: flex; }
        .tabs button { display: flex; align-items: center; gap: 3px; padding: 0 3px; background: #ffeeb9; color: #333; }
        .tabs ui-icon { width: 4px; height: 4px; }
        model-view { flex: 1; border-top: 1px solid #8b9cc0; border-left: 1px solid #8b9cc0; margin-bottom: 2px; }
      </style>
      <title-bar>Femap with NX Nastran - [tyuuritu.modfem] - [Default View]</title-bar>
      <menu-bar></menu-bar>
      <div class="bars">
        <tool-bar items="grip new open save | link | s1 s2 s3 s4 s5 | win page end grip globe | dash gear v | list tree cube v | beam v bars end grip home v pick v sel v | rot v sq v end grip *leaf pencil *pipe | teal v grid v sel v | lens end grip ax1:XY上 ax2:YZ右 ax3:ZX前 ax4:XY下 ax5:YZ左 ax6:ZX後 ax7:等角 ax8:二等角 ax9:不等角 end"></tool-bar>
        <tool-bar items="grip *g1 *g2 *g3 *g4 *g5 g6 *g6 *g7 *g8 | s1 g2 | *chk v end grip mesh mesh | dark *dot *curve *surf *tee *solid *flag *node *cross *mix *load *bond end grip al al2 al2 tbl gr gr gr br br br hour lock ang v end grip tool:カスタムツール user:ユーザツール end"></tool-bar>
      </div>
      <main>
        <side-rail></side-rail>
        <div class="left">
          <dock-panel heading="モデル情報" active>
            <tool-bar items="| list brush | gear | pick | al2 | brush v"></tool-bar>
            <model-tree></model-tree>
            <dock-tabs></dock-tabs>
          </dock-panel>
          <dock-panel heading="エンティティ エディタ">
            <tool-bar items="| open mix | no | *list az tree | lock lock"></tool-bar>
            <property-grid></property-grid>
            <div class="help"><b>厚さ</b>プレート エレメントの厚さ または要素第1コーナーの厚さ<br>Nastran - PSHELLカードT1フィールドです。または、CTRIA3, CTRIA6, CTRIAR, CQUAD4, CQUAD8, CQUADR のT1フィールド</div>
          </dock-panel>
        </div>
        <div class="right">
          <div class="tabs"><button>Default View <ui-icon name="close"></ui-icon></button></div>
          <model-view></model-view>
          <message-pane></message-pane>
        </div>
      </main>
      <status-bar></status-bar>
    `;
  }
}

customElements.define('ui-icon', UiIcon);
customElements.define('tool-bar', ToolBar);
customElements.define('menu-bar', MenuBar);
customElements.define('title-bar', TitleBar);
customElements.define('dock-panel', DockPanel);
customElements.define('scroll-track', ScrollTrack);
customElements.define('tree-item', TreeItem);
customElements.define('model-tree', ModelTree);
customElements.define('dock-tabs', DockTabs);
customElements.define('property-grid', PropertyGrid);
customElements.define('side-rail', SideRail);
customElements.define('model-view', ModelView);
customElements.define('message-pane', MessagePane);
customElements.define('status-bar', StatusBar);
customElements.define('femap-app', FemapApp);
</script>
</body>
</html>
